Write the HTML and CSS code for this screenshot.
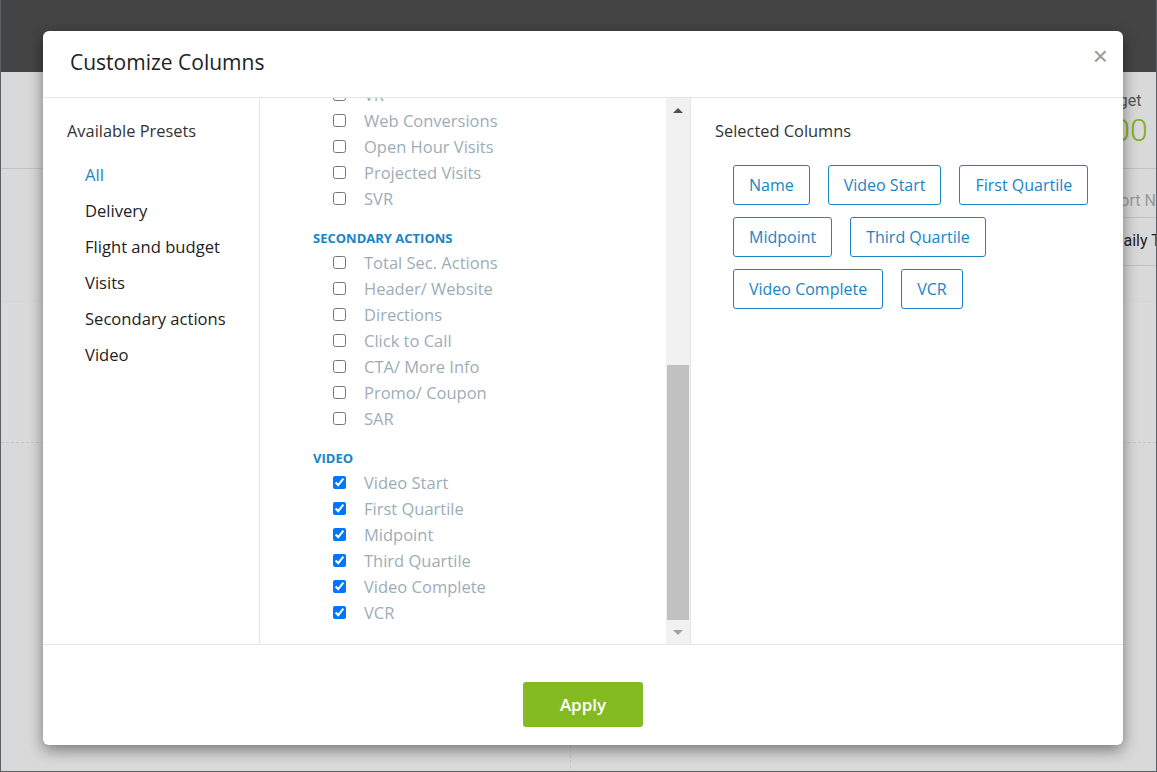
FILE: index.html
```html
<!DOCTYPE html>
<html>
<head>
<meta charset="utf-8">
<link rel="stylesheet" href="styles.css">
</head>
<body>
<div class="frame">
  <div class="topbar"></div>
  <div class="page">
    <div class="bg-row bg-r1">
      <div class="bg-right">
        <div class="bg-label">Budget</div>
        <div class="bg-value">$0.00</div>
      </div>
    </div>
    <div class="bg-row"><div class="bg-right bg-gray">Report Name</div></div>
    <div class="bg-row"><div class="bg-right bg-dark">Daily Total</div></div>
    <div class="bg-row bg-r4"></div>
    <div class="bg-row bg-r5"></div>
    <div class="bg-row bg-r6"><div class="bg-split"></div></div>
  </div>

  <div class="modal">
    <div class="modal-header">
      <h1 class="modal-title">Customize Columns</h1>
      <span class="close">&times;</span>
    </div>
    <div class="modal-body">
      <div class="presets">
        <div class="col-heading">Available Presets</div>
        <ul class="preset-list">
          <li class="active">All</li>
          <li>Delivery</li>
          <li>Flight and budget</li>
          <li>Visits</li>
          <li>Secondary actions</li>
          <li>Video</li>
        </ul>
      </div>
      <div class="columns">
        <div class="col-scroll">
          <div class="col-inner">
            <label class="opt"><input type="checkbox"><span>VR</span></label>
            <label class="opt"><input type="checkbox"><span>Web Conversions</span></label>
            <label class="opt"><input type="checkbox"><span>Open Hour Visits</span></label>
            <label class="opt"><input type="checkbox"><span>Projected Visits</span></label>
            <label class="opt"><input type="checkbox"><span>SVR</span></label>
            <div class="group">Secondary Actions</div>
            <label class="opt"><input type="checkbox"><span>Total Sec. Actions</span></label>
            <label class="opt"><input type="checkbox"><span>Header/ Website</span></label>
            <label class="opt"><input type="checkbox"><span>Directions</span></label>
            <label class="opt"><input type="checkbox"><span>Click to Call</span></label>
            <label class="opt"><input type="checkbox"><span>CTA/ More Info</span></label>
            <label class="opt"><input type="checkbox"><span>Promo/ Coupon</span></label>
            <label class="opt"><input type="checkbox"><span>SAR</span></label>
            <div class="group">Video</div>
            <label class="opt"><input type="checkbox" checked><span>Video Start</span></label>
            <label class="opt"><input type="checkbox" checked><span>First Quartile</span></label>
            <label class="opt"><input type="checkbox" checked><span>Midpoint</span></label>
            <label class="opt"><input type="checkbox" checked><span>Third Quartile</span></label>
            <label class="opt"><input type="checkbox" checked><span>Video Complete</span></label>
            <label class="opt"><input type="checkbox" checked><span>VCR</span></label>
          </div>
        </div>
        <div class="sbar">
          <div class="sbar-btn"><span class="tri-up"></span></div>
          <div class="sbar-track"><div class="sbar-thumb"></div></div>
          <div class="sbar-btn"><span class="tri-down"></span></div>
        </div>
      </div>
      <div class="selected">
        <div class="col-heading">Selected Columns</div>
        <div class="chips">
          <span class="chip">Name</span>
          <span class="chip">Video Start</span>
          <span class="chip">First Quartile</span>
          <span class="chip">Midpoint</span>
          <span class="chip">Third Quartile</span>
          <span class="chip">Video Complete</span>
          <span class="chip">VCR</span>
        </div>
      </div>
    </div>
    <div class="modal-footer">
      <button class="apply">Apply</button>
    </div>
  </div>
</div>
</body>
</html>
```

FILE: styles.css
```css
* { box-sizing: border-box; }
html, body { margin: 0; padding: 0; }
body {
  width: 1157px;
  height: 772px;
  overflow: hidden;
  font-family: "Open Sans", "Noto Sans", sans-serif;
}
.frame {
  position: relative;
  width: 1157px;
  height: 772px;
  border: 1px solid #5b6068;
  border-top: none;
  background: #d9d9d9;
  overflow: hidden;
}
.topbar {
  height: 72px;
  background: #444444;
}
.page {
  display: flex;
  flex-direction: column;
}
.bg-row {
  position: relative;
}
.bg-r1 { height: 97px; border-bottom: 1px solid #c2c2c2; }
.bg-r4 { height: 35px; }
.bg-r5 { height: 142px; border-top: 1px solid #d6d6d6; background: #dadada; border-bottom: 1px dashed #c4c4c4; }
.bg-r6 { height: 330px; display: flex; }
.bg-split { margin-left: 569px; width: 1px; border-left: 1px dashed #c8c8c8; }
.bg-right {
  margin-left: 1080px;
  white-space: nowrap;
  font-family: "Roboto", sans-serif;
}
.bg-r1 .bg-right { padding-top: 18px; padding-left: 10px; }
.bg-label { font-size: 16px; color: #555; line-height: 22px; }
.bg-value { font-size: 32px; color: #7eb01c; line-height: 36px; margin-left: -22px; font-weight: 300; }
.bg-gray {
  color: #9a9a9a;
  font-size: 16px;
  height: 49px;
  padding-top: 22px;
  padding-left: 12px;
  border-bottom: 1px solid #c2c2c2;
}
.bg-dark {
  color: #222;
  font-size: 16px;
  height: 48px;
  padding-top: 13px;
  padding-left: 32px;
  border-bottom: 1px solid #c2c2c2;
}

/* modal */
.modal {
  position: absolute;
  left: 42px;
  top: 31px;
  width: 1080px;
  height: 714px;
  background: #fff;
  border-radius: 6px;
  box-shadow: 0 5px 15px rgba(0,0,0,0.45);
  display: flex;
  flex-direction: column;
}
.modal-header {
  position: relative;
  height: 67px;
  border-bottom: 1px solid #e5e5e5;
  display: flex;
  align-items: center;
  padding-left: 27px;
}
.modal-title {
  margin: 0;
  font-size: 21px;
  font-weight: 400;
  color: #222;
  padding-bottom: 5px;
}
.close {
  position: absolute;
  right: 15px;
  top: 10px;
  font-size: 26px;
  color: #999;
  font-family: "Liberation Sans", sans-serif;
  line-height: 30px;
}
.modal-body {
  display: flex;
  height: 547px;
  border-bottom: 1px solid #e5e5e5;
}
.presets {
  width: 217px;
  border-right: 1px solid #e5e5e5;
  padding: 22px 0 0 24px;
}
.col-heading {
  font-size: 16.4px;
  color: #333;
  line-height: 22px;
}
.preset-list {
  list-style: none;
  margin: 22px 0 0 0;
  padding: 0 0 0 18px;
}
.preset-list li {
  font-size: 16.6px;
  color: #222;
  line-height: 22px;
  margin-bottom: 14px;
}
.preset-list li.active { color: #1a84c6; }

.columns {
  width: 431px;
  border-right: 1px solid #e5e5e5;
  display: flex;
}
.col-scroll {
  flex: 1;
  overflow: hidden;
}
.col-inner {
  margin-top: -17px;
  padding-left: 53px;
}
.opt {
  display: flex;
  align-items: center;
  height: 26px;
  padding-left: 20px;
}
.opt input {
  margin: 0 18px 0 0;
  width: 13px;
  height: 13px;
}
.opt span {
  font-size: 16.5px;
  color: #9dadb7;
  font-family: "Open Sans", sans-serif;
}
.group {
  margin-top: 16px;
  height: 22px;
  line-height: 22px;
  font-size: 13px;
  font-weight: 700;
  color: #1a84c6;
  text-transform: uppercase;
}
.sbar {
  width: 24px;
  background: #f1f1f1;
  display: flex;
  flex-direction: column;
}
.sbar-btn {
  height: 24px;
  display: flex;
  align-items: center;
  justify-content: center;
}
.tri-up {
  width: 0; height: 0;
  border-left: 5px solid transparent;
  border-right: 5px solid transparent;
  border-bottom: 5px solid #505050;
}
.tri-down {
  width: 0; height: 0;
  border-left: 5px solid transparent;
  border-right: 5px solid transparent;
  border-top: 5px solid #a3a3a3;
}
.sbar-track {
  flex: 1;
  display: flex;
  flex-direction: column;
  justify-content: flex-end;
  padding: 0 1px;
}
.sbar-thumb {
  height: 255px;
  background: #c1c1c1;
}

.selected {
  flex: 1;
  padding: 22px 0 0 24px;
}
.chips {
  margin-top: 23px;
  padding-left: 18px;
  display: flex;
  flex-wrap: wrap;
  gap: 12px 18px;
  width: 380px;
}
.chip {
  height: 40px;
  display: inline-flex;
  align-items: center;
  padding: 0 15px;
  border: 1px solid #1a84c6;
  border-radius: 3px;
  color: #1a84c6;
  font-size: 16px;
}
.modal-footer {
  flex: 1;
  display: flex;
  justify-content: center;
  padding-top: 37px;
}
.apply {
  width: 120px;
  height: 45px;
  border: none;
  border-radius: 3px;
  background: #84bb22;
  color: #fff;
  font-family: "Open Sans", sans-serif;
  font-size: 17px;
  font-weight: 600;
}
```
